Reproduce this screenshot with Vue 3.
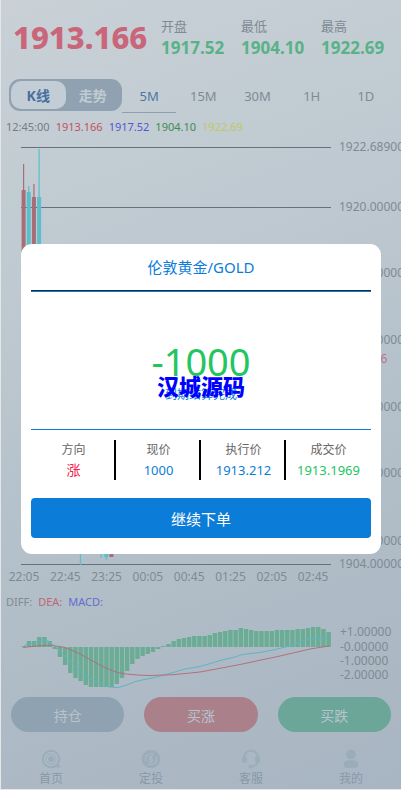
<script setup>
import { computed, ref } from "vue";

const stats = [
  { label: "开盘", value: "1917.52" },
  { label: "最低", value: "1904.10" },
  { label: "最高", value: "1922.69" },
];

const modes = ["K线", "走势"];
const mode = ref("K线");

const periods = ["5M", "15M", "30M", "1H", "1D"];
const period = ref("5M");

const ticks = [
  { text: "12:45:00", tone: "muted" },
  { text: "1913.166", tone: "red" },
  { text: "1917.52", tone: "blue" },
  { text: "1904.10", tone: "green" },
  { text: "1922.69", tone: "yellow" },
];

const priceAxis = [
  { y: 11, label: "1922.68900" },
  { y: 71, label: "1920.00000" },
  { y: 137, label: "1917.00000" },
  { y: 204, label: "1914.00000" },
  { y: 271, label: "1911.00000" },
  { y: 337, label: "1908.00000" },
  { y: 405, label: "1905.00000" },
  { y: 428, label: "1904.00000" },
];

const timeAxis = ["22:05", "22:45", "23:25", "00:05", "00:45", "01:25", "02:05", "02:45"];

const candles = [
  { slot: 0, top: 53, bottom: 130, high: 27, low: 140, up: false },
  { slot: 1, top: 55, bottom: 126, high: 49, low: 136, up: true },
  { slot: 2, top: 60, bottom: 128, high: 47, low: 134, up: false },
  { slot: 3, top: 60, bottom: 140, high: 12, low: 150, up: true },
  { slot: 11, top: 380, bottom: 400, high: 370, low: 428, up: true },
  { slot: 15, top: 400, bottom: 414, high: 390, low: 421, up: true },
  { slot: 16, top: 410, bottom: 420, high: 400, low: 423, up: true },
  { slot: 17, top: 410, bottom: 420, high: 405, low: 420, up: false },
];

const macd = [
  1, 6, 6, 10, 10, 6, -2, -10, -18, -26, -31, -34, -38, -40, -40, -40, -40, -40, -37, -31,
  -24, -17, -12, -9, -7, -5, -2, 1, 3, 6, 8, 9, 10, 11, 11, 11, 12, 14, 15, 16,
  17, 17, 19, 18, 17, 16, 16, 16, 16, 17, 17, 17, 17, 18, 18, 19, 20, 20, 18, 15,
];

const slotWidth = 310 / 60;
const slotX = (slot) => 20 + slot * slotWidth;

const macdBars = computed(() =>
  macd.map((value, index) => ({
    x: slotX(index) + 0.6,
    y: value > 0 ? 35 - value : 35,
    height: Math.abs(value),
  })),
);

const macdAxis = [
  { y: 24, label: "+1.00000" },
  { y: 39, label: "-0.00000" },
  { y: 53, label: "-1.00000" },
  { y: 67, label: "-2.00000" },
];

const result = [
  { label: "方向", value: "涨", tone: "up" },
  { label: "现价", value: "1000", tone: "info" },
  { label: "执行价", value: "1913.212", tone: "info" },
  { label: "成交价", value: "1913.1969", tone: "down" },
];

const open = ref(true);
</script>

<template>
  <div class="page">
    <header class="quote">
      <strong class="quote-price">1913.166</strong>
      <div v-for="item in stats" :key="item.label" class="quote-stat">
        <span>{{ item.label }}</span>
        <strong>{{ item.value }}</strong>
      </div>
    </header>

    <div class="tabs">
      <div class="mode">
        <button
          v-for="name in modes"
          :key="name"
          type="button"
          :class="{ 'is-active': mode === name }"
          :aria-pressed="mode === name"
          @click="mode = name"
        >
          {{ name }}
        </button>
      </div>
      <button
        v-for="name in periods"
        :key="name"
        type="button"
        class="period"
        :class="{ 'is-active': period === name }"
        :aria-pressed="period === name"
        @click="period = name"
      >
        {{ name }}
      </button>
    </div>

    <div class="legend">
      <span v-for="tick in ticks" :key="tick.text" :class="`is-${tick.tone}`">{{ tick.text }}</span>
    </div>

    <svg class="chart" viewBox="0 0 400 448" role="img" aria-label="K线">
      <g class="grid">
        <rect v-for="row in priceAxis" :key="row.label" x="20" :y="row.y - 1" width="310" height="1" />
      </g>
      <g v-for="bar in candles" :key="bar.slot" :class="bar.up ? 'candle-up' : 'candle-down'">
        <rect :x="slotX(bar.slot) + 2" :y="bar.high" width="1.2" :height="bar.low - bar.high" />
        <rect :x="slotX(bar.slot) + 0.6" :y="bar.top" width="4" :height="bar.bottom - bar.top" />
      </g>
      <text v-for="row in priceAxis" :key="row.label" class="axis-price" x="338" :y="row.y + 3">
        {{ row.label }}
      </text>
      <text class="axis-now" x="335" y="226">1913.166</text>
      <text
        v-for="(label, index) in timeAxis"
        :key="label"
        class="axis-time"
        :x="23 + index * 41.3"
        y="444"
      >
        {{ label }}
      </text>
    </svg>

    <div class="legend legend-macd">
      <span class="is-muted">DIFF:</span>
      <span class="is-red">DEA:</span>
      <span class="is-blue">MACD:</span>
    </div>

    <svg class="chart" viewBox="0 0 400 80" role="img" aria-label="MACD">
      <g class="macd-bars">
        <rect v-for="bar in macdBars" :key="bar.x" :x="bar.x" :y="bar.y" width="4.4" :height="bar.height" />
      </g>
      <path
        class="line-diff"
        d="M22 35 L26 32 L33 31 Q41 26 47 29 L56 36 L69 49 L79 59 L89 66 L99 72 L108 75 Q117 77 126 73 Q133 69 141 68 L151 66 L159 64 L174 60 L184 57 L199 54.500 L211 51 L221 48 L234 45 L241 42.500 L259 40.500 L274 37.500 L289 34 L304 28 L314 27 L328 26"
      />
      <path
        class="line-dea"
        d="M22 35.500 L35 34 Q49 32 62 35 Q71 38 79 42 L99 53 L112 59 Q122 63 149 63.500 Q172 63.500 199 60 L239 52.500 L279 44 L309 37 L328 34"
      />
      <text v-for="row in macdAxis" :key="row.label" class="axis-price" x="339" :y="row.y">
        {{ row.label }}
      </text>
    </svg>

    <div class="actions">
      <button type="button" class="is-hold">持仓</button>
      <button type="button" class="is-buy">买涨</button>
      <button type="button" class="is-sell">买跌</button>
    </div>

    <nav class="nav">
      <a href="#home">
        <svg viewBox="0 0 20 20" aria-hidden="true">
          <circle class="stroke" cx="10" cy="10" r="8.2" />
          <circle class="stroke thin" cx="10" cy="10" r="5" />
          <circle cx="10" cy="10" r="3" />
          <path d="M12 18.600 L17 14 L19.500 18.600 Z" />
        </svg>
        首页
      </a>
      <a href="#plan">
        <svg viewBox="0 0 20 20" aria-hidden="true">
          <circle cx="10" cy="10" r="9.300" />
          <path class="cut" d="M5 12.500 A5.600 5.600 0 0 1 13 5.300 M15 7.500 A5.600 5.600 0 0 1 7 14.700 M5 5.500 V8 M15 12 V14.500" />
          <path class="cut" d="M12 8 Q10 6.500 8.500 8 T10 10 T11.500 12 T8 12 M10 6 V14" />
        </svg>
        定投
      </a>
      <a href="#service">
        <svg viewBox="0 0 20 20" aria-hidden="true">
          <path class="stroke" d="M3 9 A7 7.500 0 0 1 17 9 V12 Q16 17 10 18" />
          <rect x="1" y="7" width="5" height="7" rx="2.500" />
          <rect x="14" y="7" width="5" height="7" rx="2.500" />
          <rect x="7.500" y="16" width="4.500" height="3.500" rx="1.700" />
        </svg>
        客服
      </a>
      <a href="#mine">
        <svg viewBox="0 0 20 20" aria-hidden="true">
          <circle cx="10" cy="5.500" r="4.800" />
          <path d="M2.800 16 Q3 11.500 7.500 11.300 H12.500 Q17 11.500 17.200 16 Q17.200 19 14 19 H6 Q2.800 19 2.800 16 Z" />
        </svg>
        我的
      </a>
    </nav>

    <div v-if="open" class="mask">
      <section class="dialog" role="dialog" aria-labelledby="dialog-title">
        <h2 id="dialog-title">伦敦黄金/GOLD</h2>
        <div class="dialog-body">
          <strong>-1000</strong>
          <span>到期结算完成</span>
          <b class="stamp">汉城源码</b>
        </div>
        <dl class="dialog-result">
          <div v-for="item in result" :key="item.label">
            <dt>{{ item.label }}</dt>
            <dd :class="`is-${item.tone}`">{{ item.value }}</dd>
          </div>
        </dl>
        <button type="button" class="dialog-button" @click="open = false">继续下单</button>
      </section>
    </div>
  </div>
</template>

<style>
body {
  margin: 0;
  background: #e4e6e8;
}
</style>

<style scoped>
.page {
  min-height: 788px;
  margin: 0 0 1px 1px;
  overflow: hidden;
  color: #7f8a93;
  background: linear-gradient(160deg, #c9d1d7 0%, #bdc8d0 35%, #b0bdc7 70%, #a8b5c2 100%);
  font-family: "Noto Sans", "Noto Sans CJK SC", sans-serif;
  font-size: 13px;
}

button {
  padding: 0;
  border: 0;
  background: none;
  color: inherit;
  font: inherit;
  cursor: pointer;
}

.quote {
  display: grid;
  grid-template-columns: 2fr 1fr 1fr 1fr;
  align-items: center;
  padding-top: 16px;
}

.quote-price {
  padding-left: 12px;
  color: #c9667a;
  font-size: 31px;
  font-weight: 800;
  line-height: 42px;
}

.quote-stat span,
.quote-stat strong {
  display: block;
  line-height: 21px;
}

.quote-stat strong {
  color: #59b287;
  font-size: 17px;
}

.tabs {
  display: flex;
  height: 34px;
  margin-top: 21px;
  padding: 0 8px;
}

.mode {
  display: flex;
  box-sizing: border-box;
  width: 113px;
  height: 32px;
  padding: 2px;
  border-radius: 11px;
  background: #90a2b1;
}

.mode button {
  flex: 1;
  border-radius: 10px;
  color: #c0cbd3;
  font-size: 14px;
  font-weight: 700;
}

.mode button.is-active {
  background: #c3cdd5;
  color: #476f9f;
}

.period {
  flex: 1;
  border-bottom: 1px solid transparent;
}

.period.is-active {
  border-color: #8ca0b1;
  color: #4f76a2;
}

.legend {
  display: flex;
  gap: 6px;
  padding: 4px 5px 0;
  font-size: 11px;
  line-height: 20px;
}

.legend-macd {
  padding-top: 7px;
}

.legend .is-muted {
  color: #737e87;
}

.legend .is-red {
  color: #c4515f;
}

.legend .is-blue {
  color: #5258d0;
}

.legend .is-green {
  color: #3d8d53;
}

.legend .is-yellow {
  color: #c2c860;
}

.legend-macd span {
  opacity: 0.8;
}

.chart {
  display: block;
  width: 100%;
}

.grid rect {
  fill: #65717b;
}

.candle-up {
  fill: #5bbfcb;
}

.candle-down {
  fill: #a76e76;
}

.axis-price {
  fill: #7f8a93;
  font-size: 12px;
}

.axis-now {
  fill: #b97582;
  font-size: 12px;
}

.axis-time {
  fill: #7f8a93;
  font-size: 12px;
  text-anchor: middle;
}

.macd-bars {
  fill: #6aac94;
}

.line-diff,
.line-dea {
  fill: none;
  stroke-width: 1;
}

.line-diff {
  stroke: #5fb4c4;
}

.line-dea {
  stroke: #b3707e;
}

.actions {
  display: grid;
  grid-template-columns: repeat(3, 1fr);
  gap: 20px;
  padding: 5px 10px 0;
}

.actions button {
  height: 35px;
  border-radius: 18px;
  color: #b8c4cd;
  font-size: 14px;
}

.actions .is-hold {
  background: #8fa2b1;
}

.actions .is-buy {
  background: #aa808a;
}

.actions .is-sell {
  background: #6ba698;
}

.nav {
  display: grid;
  grid-template-columns: repeat(4, 1fr);
  padding-top: 17px;
}

.nav a {
  display: flex;
  flex-direction: column;
  align-items: center;
  color: #8798a8;
  font-size: 12px;
  line-height: 20px;
  text-decoration: none;
}

.nav svg {
  width: 20px;
  height: 20px;
  fill: #9badb9;
}

.nav .stroke {
  fill: none;
  stroke: #9badb9;
  stroke-width: 2;
}

.nav .thin {
  stroke-width: 1;
}

.nav .cut {
  fill: none;
  stroke: #adbac5;
  stroke-width: 1;
}

.mask {
  position: fixed;
  inset: 0 0 0 1px;
  display: flex;
  align-items: center;
  justify-content: center;
  padding-top: 8px;
}

.dialog {
  box-sizing: border-box;
  width: 90%;
  padding: 0 10px 16px;
  border-radius: 11px;
  background: #fff;
}

.dialog h2 {
  margin: 0;
  border-bottom: 1px solid #202a38;
  color: #0b7dd8;
  font-size: 15px;
  font-weight: 400;
  line-height: 46px;
  text-align: center;
}

.dialog-body {
  position: relative;
  display: flex;
  flex-direction: column;
  gap: 4px;
  align-items: center;
  padding: 49px 0 24px;
  border-top: 1px solid #0b7dd8;
  border-bottom: 1px solid #0b7dd8;
}

.dialog-body strong {
  color: #22c55e;
  font-size: 38px;
  font-weight: 400;
  line-height: 40px;
}

.dialog-body span {
  color: #0b7dd8;
  font-size: 12px;
  line-height: 20px;
}

.stamp {
  position: absolute;
  top: 82px;
  color: #0000fe;
  font-size: 22px;
  font-weight: 900;
  line-height: 24px;
}

.dialog-result {
  display: grid;
  grid-template-columns: repeat(4, 1fr);
  margin: 10px 0 18px;
  line-height: 20px;
  text-align: center;
}

.dialog-result div + div {
  border-left: 2px solid #000;
  margin-left: -2px;
}

.dialog-result dt {
  color: #666;
  font-size: 12px;
}

.dialog-result dd {
  margin: 0;
}

.dialog-result .is-up {
  color: #f5224b;
  font-size: 14px;
}

.dialog-result .is-info {
  color: #0b7dd8;
}

.dialog-result .is-down {
  color: #22c55e;
}

.dialog-button {
  width: 100%;
  height: 40px;
  border-radius: 4px;
  background: #0b7dd8;
  color: #fff;
  font-size: 15px;
}
</style>
